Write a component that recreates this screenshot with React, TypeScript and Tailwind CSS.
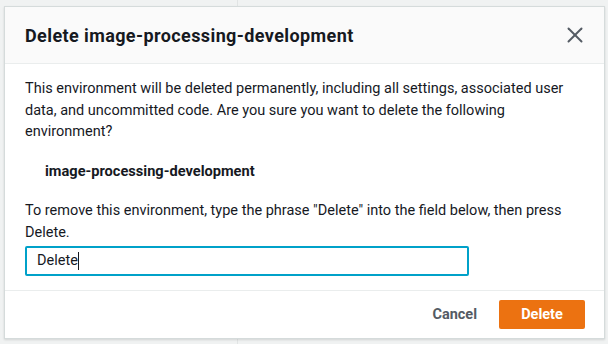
import { X } from "lucide-react";

const font = { fontFamily: "Roboto, 'Liberation Sans', sans-serif" };

export default function App() {
  return (
    <div
      className="w-[608px] h-[344px] bg-[#f0f2f2] flex pt-[6px] pl-[4px] pr-[3px] pb-[5px] relative"
      style={font}
    >
      <div className="absolute left-[237px] top-0 h-full w-px bg-[#e1e4e4]" />
      <div className="relative flex flex-col w-full h-full bg-white border border-[#d5dbdb] shadow-[0_1px_2px_rgba(0,0,0,0.12)]">
        <header className="h-[57px] flex items-center justify-between pl-[20px] pr-[16px] bg-[#fafafa] border-b border-[#eaeded]">
          <h1 className="text-[18px] font-bold tracking-[0.4px] text-[#16191f]">
            Delete image-processing-development
          </h1>
          <X className="w-[26px] h-[26px] text-[#545b64]" strokeWidth={1.8} />
        </header>
        <div className="flex flex-col px-[20px] pt-[14px] flex-1 text-[14.5px] leading-[21.5px] text-[#16191f]">
          <p>
            This environment will be deleted permanently, including all settings, associated user data, and
            uncommitted code. Are you sure you want to delete the following environment?
          </p>
          <p className="font-bold text-[14.6px] pl-[20px] mt-[18px]">image-processing-development</p>
          <p className="mt-[18px]">
            To remove this environment, type the phrase "Delete" into the field below, then press Delete.
          </p>
          <div className="mt-[3px] w-[444px] h-[30px] border-2 border-[#00a1c9] rounded-[2px] flex items-center px-[10px]">
            <span>Delete</span>
            <span className="w-px h-[18px] bg-[#16191f]" />
          </div>
        </div>
        <footer className="h-[48px] border-t border-[#eaeded] flex items-center justify-end gap-[22px] pr-[19px]">
          <span className="text-[14.5px] font-bold text-[#545b64]">Cancel</span>
          <button className="w-[86px] h-[29px] bg-[#ec7211] rounded-[2px] text-white text-[14.5px] font-bold">
            Delete
          </button>
        </footer>
      </div>
    </div>
  );
}
